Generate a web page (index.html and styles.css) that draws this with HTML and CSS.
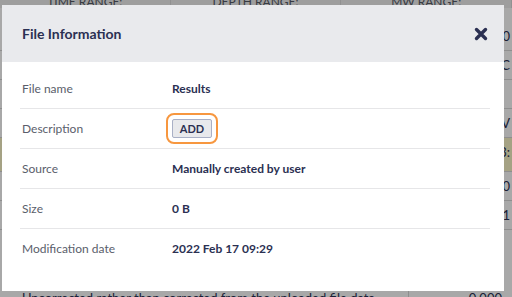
FILE: index.html
```html
<!DOCTYPE html>
<html lang="en">
<head>
    <meta charset="UTF-8">
    <meta name="viewport" content="width=device-width, initial-scale=1.0">
    <title>File Information</title>
    <link rel="stylesheet" href="styles.css">
</head>
<body>
    <!-- Page behind the dialog -->
    <div class="page">
        <div class="ranges">
            <div class="range">TIME RANGE:</div>
            <div class="range">DEPTH RANGE:</div>
            <div class="range">MW RANGE:</div>
        </div>
        <div class="sheet">
            <div class="sheet-row">0</div>
            <div class="sheet-row">C</div>
            <div class="sheet-row"></div>
            <div class="sheet-row">V</div>
            <div class="sheet-row highlight">3:</div>
            <div class="sheet-row">0</div>
            <div class="sheet-row">1</div>
            <div class="sheet-row last">
                <span class="note">Uncorrected rather than corrected from the uploaded file data</span>
                <span class="num">0.000</span>
            </div>
        </div>
    </div>

    <div class="overlay"></div>

    <!-- File information dialog -->
    <div class="modal">
        <div class="modal-header">
            <h2>File Information</h2>
            <button class="close" aria-label="Close">
                <svg width="14" height="14" viewBox="0 0 14 14">
                    <path d="M2.5 2.5 L11.5 11.5 M11.5 2.5 L2.5 11.5" stroke="#2b3052" stroke-width="3.4" stroke-linecap="round"/>
                </svg>
            </button>
        </div>
        <div class="modal-body">
            <div class="info-row">
                <div class="label">File name</div>
                <div class="value">Results</div>
            </div>
            <div class="info-row">
                <div class="label">Description</div>
                <div class="value"><button class="add-button">ADD</button></div>
            </div>
            <div class="info-row">
                <div class="label">Source</div>
                <div class="value">Manually created by user</div>
            </div>
            <div class="info-row">
                <div class="label">Size</div>
                <div class="value">0 B</div>
            </div>
            <div class="info-row">
                <div class="label">Modification date</div>
                <div class="value">2022 Feb 17 09:29</div>
            </div>
        </div>
    </div>
</body>
</html>
```

FILE: styles.css
```css
body {
    font-family: Lato, "Open Sans", sans-serif;
    margin: 0;
    background-color: #ffffff;
    color: #2b3052;
    overflow: hidden;
}
.page {
    height: 297px;
    display: flex;
    flex-direction: column;
    overflow: hidden;
}
.ranges {
    display: flex;
    height: 14px;
    margin-top: -6px;
    background-color: #f0f0f0;
}
.range {
    flex: 1;
    text-align: center;
    font-size: 12px;
    color: #555a66;
    border-right: 1px solid #dddddd;
}
.sheet {
    flex: 1;
    display: flex;
    flex-direction: column;
    padding-top: 14px;
}
.sheet-row {
    height: 28px;
    border-bottom: 1px solid #d8d8d8;
    text-align: right;
    font-size: 13px;
    line-height: 28px;
    padding-right: 2px;
}
.sheet-row.highlight {
    height: 33px;
    background-color: #fbf6c8;
}
.sheet-row.last {
    margin-top: auto;
    height: 7px;
    border-bottom: none;
    display: flex;
    text-align: left;
    padding: 0;
    line-height: 16px;
    overflow: hidden;
}
.note {
    width: 386px;
    padding-left: 22px;
    border-right: 1px solid #d8d8d8;
}
.num {
    flex: 1;
    text-align: right;
    padding-right: 10px;
}
.overlay {
    position: fixed;
    top: 0;
    left: 0;
    right: 0;
    bottom: 0;
    background-color: rgba(0, 0, 0, 0.34);
}
.modal {
    position: fixed;
    top: 5px;
    left: 2px;
    width: 502px;
    height: 286px;
    background: white;
    display: flex;
    flex-direction: column;
}
.modal-header {
    height: 57px;
    background-color: #e9eaed;
    display: flex;
    align-items: center;
    justify-content: space-between;
    padding: 0 16px 0 20px;
}
.modal-header h2 {
    margin: 0;
    font-size: 14px;
    font-weight: bold;
}
.close {
    background: none;
    border: none;
    padding: 0;
    width: 14px;
    height: 14px;
    cursor: pointer;
}
.close svg {
    display: block;
}
.modal-body {
    padding: 7px 14px 0 18px;
}
.info-row {
    display: flex;
    align-items: center;
    height: 39px;
    border-bottom: 1px solid #e6e6e8;
    font-size: 12px;
}
.info-row:last-child {
    border-bottom: none;
}
.label {
    width: 150px;
    padding-left: 2px;
    color: #5a5e6b;
}
.value {
    font-weight: bold;
}
.add-button {
    font-family: Lato, sans-serif;
    font-size: 11px;
    font-weight: bold;
    color: #2b3052;
    background-color: #e8e9ec;
    border: 1px solid #a9b0c6;
    border-radius: 2px;
    width: 40px;
    height: 19px;
    padding: 0;
    outline: 2px solid #f7973f;
    outline-offset: 4px;
    cursor: pointer;
}
```
